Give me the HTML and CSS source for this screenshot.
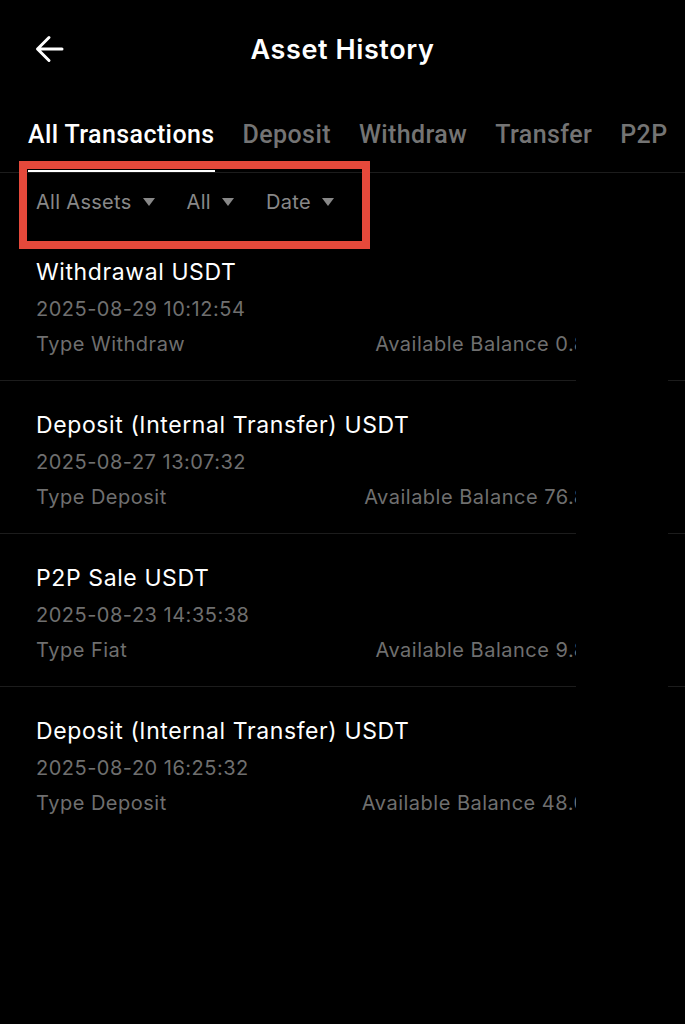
FILE: index.html
```html
<!DOCTYPE html>
<html lang="en">

<head>
    <meta charset="UTF-8">
    <meta name="viewport" content="width=device-width, initial-scale=1.0">
    <title>Asset History</title>
    <link rel="stylesheet" href="styles.css">
</head>

<body>

    <div class="screen">

        <header class="topbar">
            <span class="back">
                <svg width="30" height="30" viewBox="0 0 30 30" fill="none" stroke="#fff" stroke-width="3"
                    stroke-linecap="round" stroke-linejoin="round">
                    <path d="M27 15H3M14 3.5L2.5 15 14 26.5" />
                </svg>
            </span>
            <h1 class="title">Asset History</h1>
            <span></span>
        </header>

        <nav class="tabs">
            <span class="tab active">All Transactions</span>
            <span class="tab">Deposit</span>
            <span class="tab">Withdraw</span>
            <span class="tab">Transfer</span>
            <span class="tab">P2P</span>
        </nav>

        <div class="filters">
            <span class="filter">All Assets <i class="caret"></i></span>
            <span class="filter">All <i class="caret"></i></span>
            <span class="filter">Date <i class="caret"></i></span>
        </div>

        <div class="records">
            <div class="record">
                <div class="rec-title">Withdrawal USDT</div>
                <div class="rec-date">2025-08-29 10:12:54</div>
                <div class="rec-meta">
                    <span>Type Withdraw</span>
                    <span class="balance">Available Balance 0.81542</span>
                </div>
            </div>
            <div class="record">
                <div class="rec-title">Deposit (Internal Transfer) USDT</div>
                <div class="rec-date">2025-08-27 13:07:32</div>
                <div class="rec-meta">
                    <span>Type Deposit</span>
                    <span class="balance">Available Balance 76.81542</span>
                </div>
            </div>
            <div class="record">
                <div class="rec-title">P2P Sale USDT</div>
                <div class="rec-date">2025-08-23 14:35:38</div>
                <div class="rec-meta">
                    <span>Type Fiat</span>
                    <span class="balance">Available Balance 9.81542</span>
                </div>
            </div>
            <div class="record last">
                <div class="rec-title">Deposit (Internal Transfer) USDT</div>
                <div class="rec-date">2025-08-20 16:25:32</div>
                <div class="rec-meta">
                    <span>Type Deposit</span>
                    <span class="balance">Available Balance 48.01542</span>
                </div>
            </div>

            <!-- dark panel cropped over the right edge of the list -->
            <div class="mask"></div>
        </div>

        <!-- red annotation box around the filters -->
        <div class="callout"></div>

    </div>

</body>

</html>
```

FILE: styles.css
```css
body {
    margin: 0;
    padding: 0;
    background-color: #000;
    color: #fff;
    font-family: Inter, "Noto Sans", sans-serif;
}

.screen {
    position: relative;
    width: 685px;
    height: 1024px;
    background-color: #000;
    overflow: hidden;
}

.topbar {
    height: 98px;
    display: grid;
    grid-template-columns: 1fr auto 1fr;
    align-items: center;
}

.back {
    padding-left: 35px;
    display: flex;
    align-items: center;
}

.title {
    margin: 0;
    font-size: 27px;
    font-weight: 600;
    letter-spacing: 0.6px;
}

.tabs {
    display: flex;
    gap: 28px;
    padding: 22px 0 0 28px;
    border-bottom: 1px solid #1c1c1c;
    font-family: Roboto, "Liberation Sans", sans-serif;
    font-size: 25px;
    font-weight: 500;
    letter-spacing: 0.4px;
    white-space: nowrap;
}

.tab {
    line-height: 30px;
    padding-bottom: 20px;
    border-bottom: 2px solid transparent;
    color: #747474;
}

.tab.active {
    color: #fff;
    border-bottom-color: #fff;
}

.filters {
    display: flex;
    align-items: center;
    gap: 32px;
    padding: 15px 0 12px 36px;
    font-size: 20px;
    letter-spacing: 0.3px;
    line-height: 28px;
    color: #888;
}

.filter {
    display: flex;
    align-items: center;
    gap: 11px;
}

.caret {
    width: 0;
    height: 0;
    border-left: 6px solid transparent;
    border-right: 6px solid transparent;
    border-top: 8px solid #888;
}

.records {
    position: relative;
}

.record {
    padding: 29px 51px 21px 36px;
    border-bottom: 1px solid #1c1c1c;
}

.record.last {
    border-bottom: none;
}

.rec-title {
    font-size: 23px;
    letter-spacing: 0.6px;
    line-height: 30px;
    color: #fff;
}

.rec-date {
    margin-top: 7px;
    font-size: 20px;
    letter-spacing: 0.5px;
    line-height: 30px;
    color: #6f6f6f;
}

.rec-meta {
    margin-top: 5px;
    display: flex;
    justify-content: space-between;
    font-size: 20px;
    letter-spacing: 0.5px;
    line-height: 30px;
    color: #6f6f6f;
    white-space: nowrap;
}

.mask {
    position: absolute;
    top: 0;
    bottom: 0;
    left: 576px;
    width: 92px;
    background-color: #000;
}

.callout {
    position: absolute;
    left: 19px;
    top: 161px;
    width: 351px;
    height: 88px;
    box-sizing: border-box;
    border: 8px solid #e5493b;
}
```
